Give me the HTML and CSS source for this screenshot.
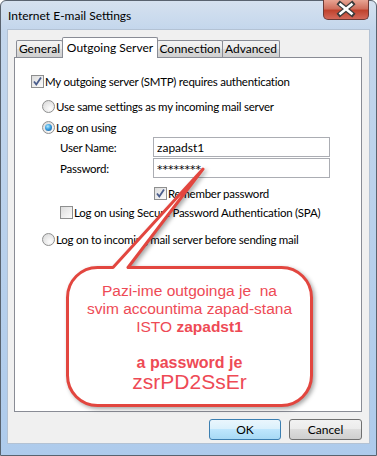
FILE: index.html
```html
<!DOCTYPE html>
<html lang="en">
<head>
    <meta charset="UTF-8">
    <title>Internet E-mail Settings</title>
    <link rel="stylesheet" href="styles.css">
</head>
<body>
    <div class="window">
        <div class="titlebar">
            <span class="title">Internet E-mail Settings</span>
            <div class="close">
                <svg width="46" height="20" viewBox="0 0 46 20">
                    <path d="M17 5 L29 15 M29 5 L17 15" stroke="#3b3b3b" stroke-width="5" stroke-linecap="square"/>
                    <path d="M17.5 5.5 L28.5 14.5 M28.5 5.5 L17.5 14.5" stroke="#fff" stroke-width="2.6" stroke-linecap="square"/>
                </svg>
            </div>
        </div>

        <div class="client">
            <div class="tabs">
                <div class="tab tab-general">General</div>
                <div class="tab tab-active tab-outgoing">Outgoing Server</div>
                <div class="tab tab-connection">Connection</div>
                <div class="tab tab-advanced">Advanced</div>
            </div>

            <div class="panel">
                <div class="row row-auth">
                    <span class="check"><svg width="11" height="11" viewBox="0 0 11 11"><path d="M2 5.5 L4.3 8.5 L9 1.5" fill="none" stroke="#4a5d8c" stroke-width="1.8"/></svg></span>
                    My outgoing server (SMTP) requires authentication
                </div>
                <div class="row row-radio row-same">
                    <span class="radio"></span>
                    Use same settings as my incoming mail server
                </div>
                <div class="row row-radio row-logon">
                    <span class="radio checked"></span>
                    Log on using
                </div>
                <div class="field-row field-user">
                    <span class="field-label">User Name:</span>
                    <input class="field" type="text" value="zapadst1" readonly>
                </div>
                <div class="field-row field-pass">
                    <span class="field-label">Password:</span>
                    <input class="field field-secret" type="text" value="********" readonly>
                </div>
                <div class="row row-remember">
                    <span class="check"><svg width="11" height="11" viewBox="0 0 11 11"><path d="M2 5.5 L4.3 8.5 L9 1.5" fill="none" stroke="#4a5d8c" stroke-width="1.8"/></svg></span>
                    Remember password
                </div>
                <div class="row row-spa">
                    <span class="check"></span>
                    Log on using Secure Password Authentication (SPA)
                </div>
                <div class="row row-radio row-before">
                    <span class="radio"></span>
                    Log on to incoming mail server before sending mail
                </div>
            </div>

            <div class="buttons">
                <div class="btn btn-default">OK</div>
                <div class="btn btn-cancel">Cancel</div>
            </div>
        </div>

        <!-- annotation bubble drawn over the dialog -->
        <div class="callout">
            <svg class="callout-shape" width="247" height="141" viewBox="0 0 247 141">
                <path d="M31.5 1.5 H47 L137 -97 L62 1.5 H215.5 A30 30 0 0 1 245.5 31.5 V109.5 A30 30 0 0 1 215.5 139.5 H31.5 A30 30 0 0 1 1.5 109.5 V31.5 A30 30 0 0 1 31.5 1.5 Z"
                      fill="#fff" stroke="#e2463f" stroke-width="3" stroke-linejoin="round"/>
            </svg>
            <div class="callout-text">
                <div>Pazi-ime outgoinga je&nbsp; na</div>
                <div>svim accountima zapad-stana</div>
                <div>ISTO <b>zapadst1</b></div>
                <div>&nbsp;</div>
                <div class="pass-label"><b>a password je</b></div>
                <div class="pass-value">zsrPD2SsEr</div>
            </div>
        </div>
    </div>
</body>
</html>
```

FILE: styles.css
```css
body {
    margin: 0;
    font-family: Lato, "Noto Sans", sans-serif;
    font-size: 12px;
    color: #000;
}
.window {
    position: relative;
    width: 377px;
    height: 456px;
    box-sizing: border-box;
    border: 1px solid #59636f;
    border-radius: 6px 6px 0 0;
    padding: 0 6px 11px;
    background: linear-gradient(to bottom, #d5e1ef 0, #c3d6ec 30px, #aecbec 100%);
    display: flex;
    flex-direction: column;
}
.titlebar {
    height: 28px;
    display: flex;
    align-items: center;
    padding-left: 1px;
}
.close {
    position: absolute;
    top: -1px;
    right: 7px;
    width: 46px;
    height: 20px;
    box-sizing: border-box;
    border: 1px solid #6b3a36;
    border-top: none;
    border-radius: 0 0 5px 5px;
    background: linear-gradient(to bottom, #e8a493 0, #d0705e 45%, #c0432e 55%, #d3695a 100%);
}
.close svg {
    display: block;
    margin: -1px 0 0 -1px;
}
.client {
    flex: 1;
    border: 1px solid #b3c2d4;
    background: #f0f0f0;
    padding: 7px 7px 3px 6px;
    display: flex;
    flex-direction: column;
}
.tabs {
    display: flex;
    align-items: flex-end;
    height: 20px;
    padding-left: 2px;
    position: relative;
    z-index: 1;
}
.tab {
    box-sizing: border-box;
    height: 17px;
    border: 1px solid #898c95;
    border-bottom: none;
    border-radius: 2px 2px 0 0;
    background: linear-gradient(to bottom, #f3f3f3 0, #ebebeb 50%, #dddddd 50%, #cfcfcf 100%);
    text-align: center;
    line-height: 15px;
    margin-left: -1px;
}
.tab-general {
    width: 47px;
    margin-left: 0;
}
.tab-outgoing {
    width: 96px;
}
.tab-connection {
    width: 66px;
}
.tab-advanced {
    width: 58px;
}
.tab-active {
    height: 21px;
    margin-bottom: -1px;
    background: #fff;
    line-height: 19px;
}
.panel {
    height: 355px;
    box-sizing: border-box;
    border: 1px solid #898c95;
    background: #fff;
    padding-top: 15px;
    font-size: 11.5px;
    letter-spacing: -0.25px;
}
.row {
    display: flex;
    align-items: center;
    height: 16px;
    white-space: nowrap;
}
.row-auth {
    margin-left: 16px;
}
.row-radio {
    margin-left: 27px;
}
.row-same {
    margin-top: 9px;
}
.row-logon {
    margin-top: 5px;
}
.row-remember {
    margin-left: 139px;
    margin-top: 7px;
}
.row-spa {
    margin-left: 45px;
    margin-top: 3px;
}
.row-before {
    margin-top: 11px;
}
.check {
    width: 13px;
    height: 13px;
    box-sizing: border-box;
    flex: none;
    margin-right: 1px;
    border: 1px solid #8e8f8f;
    background: linear-gradient(135deg, #dcdcdc, #fcfcfc);
}
.check svg {
    display: block;
}
.radio {
    position: relative;
    width: 13px;
    height: 13px;
    box-sizing: border-box;
    flex: none;
    margin-right: 1px;
    border: 1px solid #8e8f8f;
    border-radius: 50%;
    background: radial-gradient(circle at 65% 70%, #fdfdfd, #d5d5d5);
}
.radio.checked::after {
    content: "";
    position: absolute;
    left: 2px;
    top: 2px;
    width: 7px;
    height: 7px;
    border-radius: 50%;
    background: radial-gradient(circle at 40% 35%, #b3ebff 0, #3a9fe0 45%, #1a4f8a 100%);
}
.field-row {
    display: flex;
    align-items: center;
    height: 20px;
    margin-left: 45px;
}
.field-user {
    margin-top: 2px;
}
.field-pass {
    margin-top: 1px;
}
.field-label {
    width: 93px;
}
.field {
    width: 177px;
    height: 20px;
    box-sizing: border-box;
    border: 1px solid #abadb3;
    padding: 0 0 0 3px;
    font-family: Lato, "Noto Sans", sans-serif;
    font-size: 12px;
    color: #000;
    outline: none;
}
.field-secret {
    font-family: "DejaVu Sans", sans-serif;
    font-size: 11px;
    letter-spacing: 0;
    padding-top: 3px;
}
.buttons {
    display: flex;
    justify-content: flex-end;
    gap: 8px;
    margin-top: 7px;
}
.btn {
    height: 21px;
    box-sizing: border-box;
    border: 1px solid #707070;
    border-radius: 3px;
    text-align: center;
    line-height: 19px;
    background: linear-gradient(to bottom, #f2f2f2 0, #ebebeb 50%, #dddddd 50%, #cfcfcf 100%);
}
.btn-default {
    width: 72px;
    border-color: #3c7fb1;
    background: linear-gradient(to bottom, #eaf6fd 0, #d9f0fc 50%, #bee6fd 50%, #a7d9f5 100%);
}
.btn-cancel {
    width: 73px;
}
.callout {
    position: absolute;
    left: 65px;
    top: 265px;
    width: 247px;
    height: 141px;
}
.callout-shape {
    position: absolute;
    left: 0;
    top: 0;
    overflow: visible;
    filter: drop-shadow(2px 2px 2px rgba(0, 0, 0, 0.35));
}
.callout-text {
    position: relative;
    padding-top: 16px;
    text-align: center;
    font-family: "Liberation Sans", Arial, sans-serif;
    font-size: 15.5px;
    line-height: 18px;
    color: #ee4a55;
}
.pass-label {
    font-size: 16px;
}
.pass-value {
    font-size: 21px;
    line-height: 20px;
}
```
